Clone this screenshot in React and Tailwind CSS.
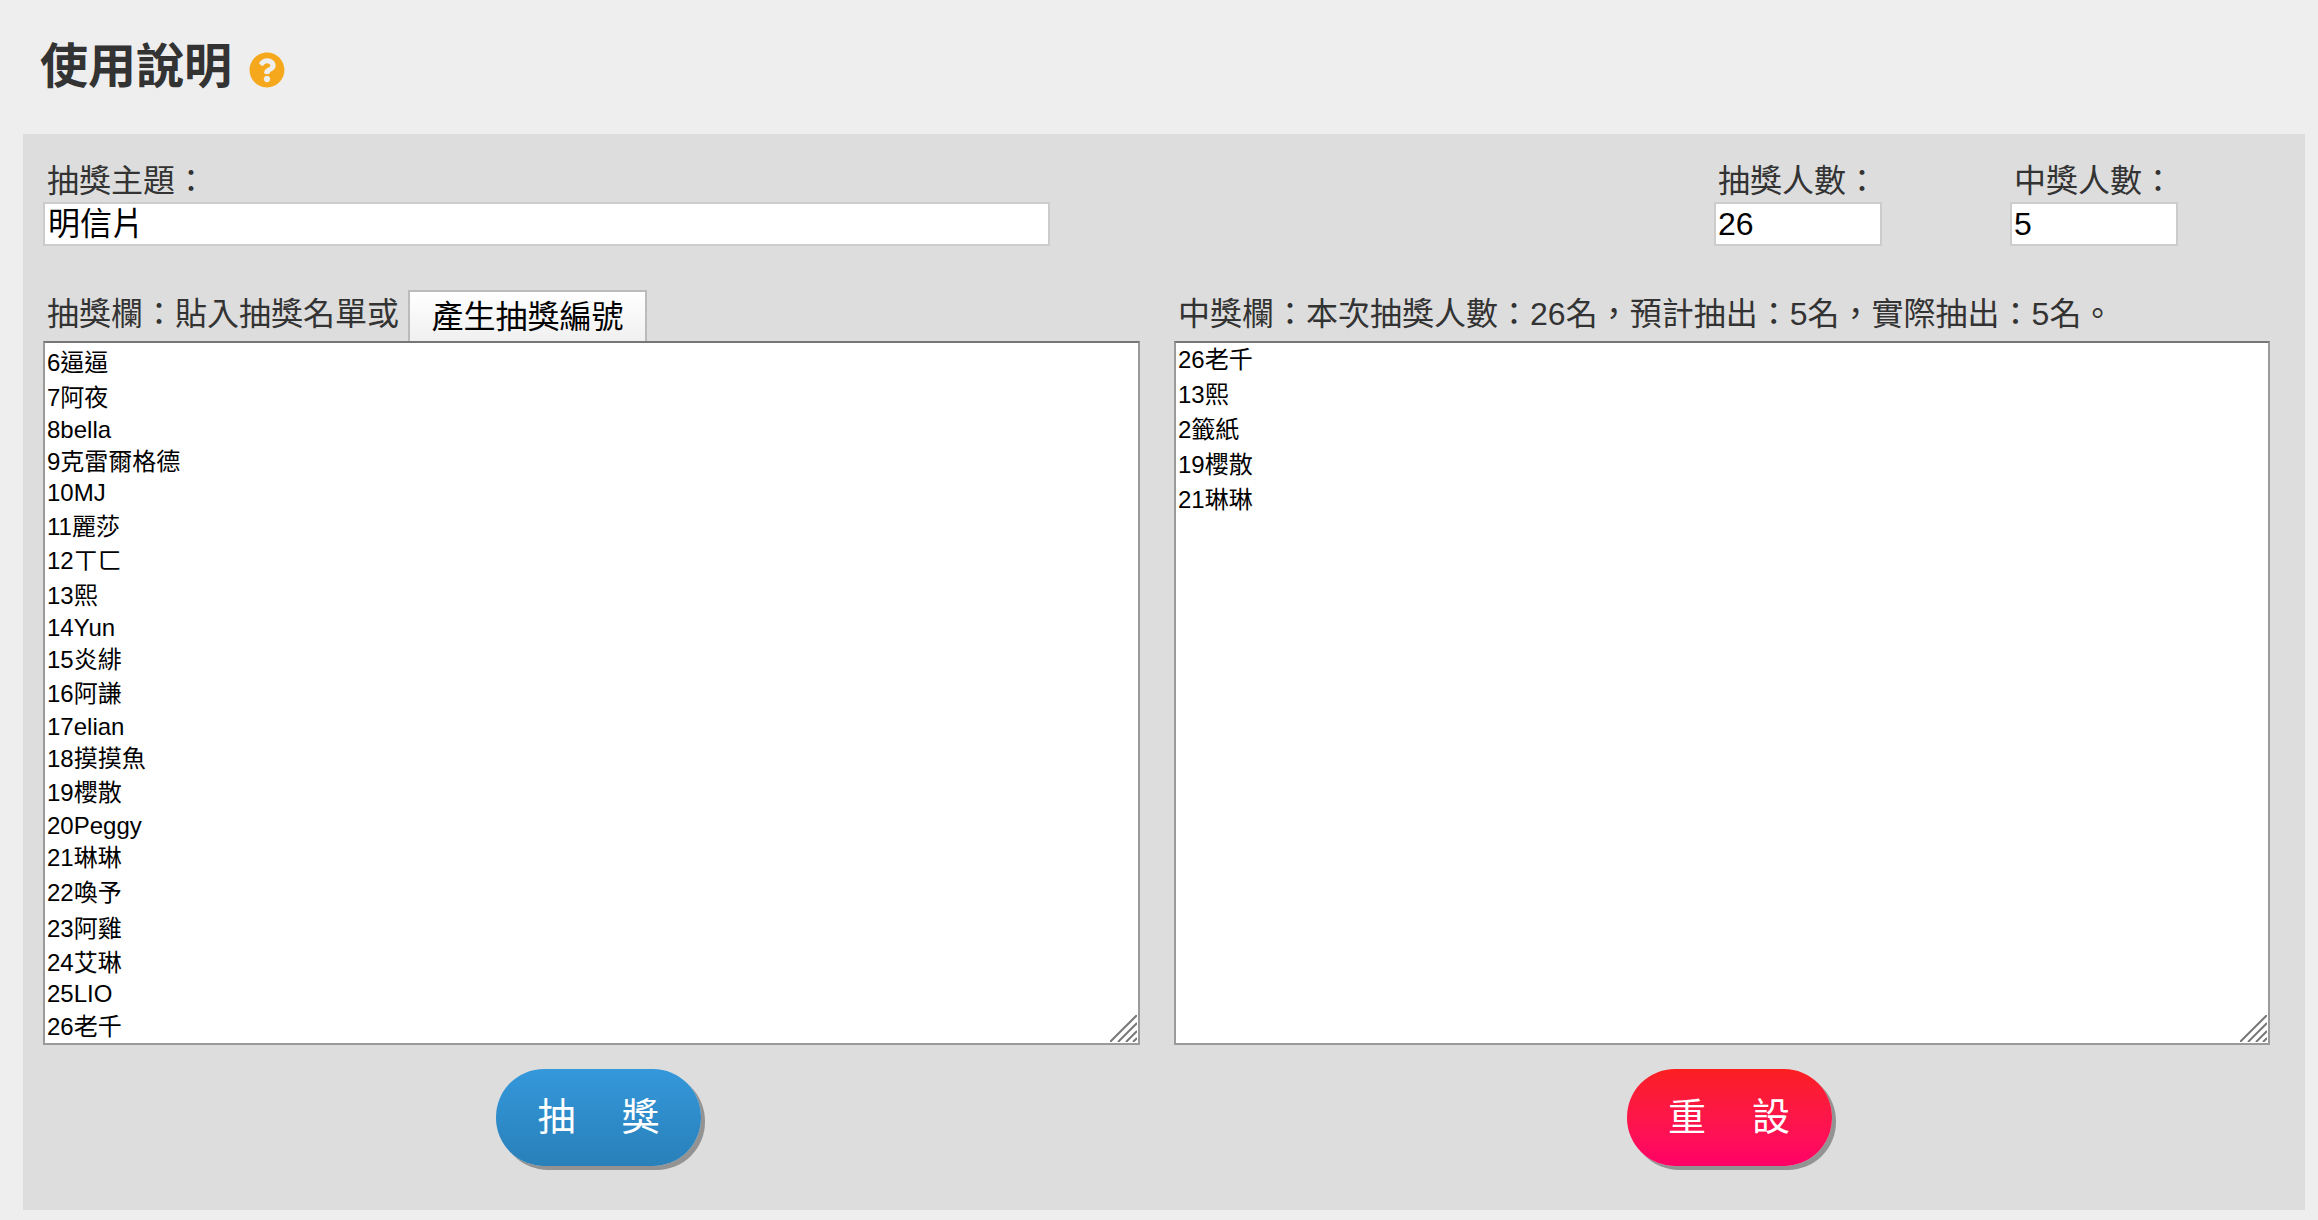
import React from 'react';
import { FaQuestionCircle } from 'react-icons/fa';

// row heights vary a bit in the original because of font fallback
const entries = [
  ['6逼逼', 'h-[35px]'],
  ['7阿夜', 'h-[32px]'],
  ['8bella', 'h-[32px]'],
  ['9克雷爾格德', 'h-[31px]'],
  ['10MJ', 'h-[34px]'],
  ['11麗莎', 'h-[34px]'],
  ['12ㄒㄈ', 'h-[35px]'],
  ['13熙', 'h-[32px]'],
  ['14Yun', 'h-[32px]'],
  ['15炎緋', 'h-[34px]'],
  ['16阿謙', 'h-[33px]'],
  ['17elian', 'h-[32px]'],
  ['18摸摸魚', 'h-[34px]'],
  ['19櫻散', 'h-[33px]'],
  ['20Peggy', 'h-[32px]'],
  ['21琳琳', 'h-[35px]'],
  ['22喚予', 'h-[36px]'],
  ['23阿雞', 'h-[34px]'],
  ['24艾琳', 'h-[31px]'],
  ['25LIO', 'h-[33px]'],
  ['26老千', 'h-[32px]'],
];

const winners = ['26老千', '13熙', '2籤紙', '19櫻散', '21琳琳'];

// full-width punctuation
const COLON = '\uFF1A';
const COMMA = '\uFF0C';

// textarea corner grip
const Grip = () => (
  <svg className="absolute bottom-[1px] right-[1px]" width="27" height="27" viewBox="0 0 27 27" fill="none" stroke="#777777" strokeWidth="2">
    <path d="M0 27 27 0" />
    <path d="M8 27 27 8" />
    <path d="M16 27 27 16" />
    <path d="M23 27 27 23" />
  </svg>
);

const App = () => {
  return (
    <div className="h-screen overflow-hidden bg-[#eeeeee] font-['Liberation_Sans','Noto_Sans_CJK_TC',sans-serif] text-[#333333]">
      {/* Title */}
      <div className="flex h-[134px] items-center pb-[1px] pl-[40px]">
        <h1 className="text-[48px] font-bold leading-none">使用說明</h1>
        <FaQuestionCircle className="ml-[17px] mt-[6px] h-[36px] w-[36px] text-[#f5a81c]" />
      </div>

      {/* Panel */}
      <div className="ml-[23px] mr-[13px] h-[1076px] bg-[#dddddd] pl-[20px] pr-[22px] pt-[27px]">
        {/* Top fields */}
        <div className="flex">
          <div className="w-[1007px]">
            <label className="block h-[41px] pl-[4px] text-[32px] leading-[40px]">抽獎主題{COLON}</label>
            <div className="flex h-[44px] items-center border-2 border-[#cccccc] bg-white pl-[3px] text-[32px] text-black">明信片</div>
          </div>
          <div className="ml-[664px] w-[168px]">
            <label className="block h-[41px] pl-[4px] text-[32px] leading-[40px]">抽獎人數{COLON}</label>
            <div className="flex h-[44px] items-center border-2 border-[#cccccc] bg-white pl-[2px] text-[32px] text-black">26</div>
          </div>
          <div className="ml-[128px] w-[168px]">
            <label className="block h-[41px] pl-[4px] text-[32px] leading-[40px]">中獎人數{COLON}</label>
            <div className="flex h-[44px] items-center border-2 border-[#cccccc] bg-white pl-[2px] text-[32px] text-black">5</div>
          </div>
        </div>

        {/* Lists */}
        <div className="mt-[44px] grid grid-cols-[1097px_1096px] gap-x-[34px]">
          <div>
            <div className="flex h-[51px] items-end pl-[4px]">
              <span className="mb-[7px] text-[32px] leading-[40px]">抽獎欄{COLON}貼入抽獎名單或</span>
              <button className="ml-[9px] h-[51px] w-[239px] border-2 border-b-0 border-[#bbbbbb] bg-gradient-to-b from-white to-[#f0f0f0] text-[32px] text-black">
                產生抽獎編號
              </button>
            </div>
            <div className="relative h-[704px] overflow-hidden border-2 border-[#9a9a9a] border-t-[#767676] bg-white pl-[2px] pt-[4px] text-[24px] text-black">
              {entries.map(([name, height]) => (
                <div key={name} className={`${height} leading-[32px]`}>{name}</div>
              ))}
              <Grip />
            </div>
          </div>
          <div>
            <div className="flex h-[51px] items-end pl-[4px]">
              <span className="mb-[7px] text-[32px] leading-[40px]">
                中獎欄{COLON}本次抽獎人數{COLON}26名{COMMA}預計抽出{COLON}5名{COMMA}實際抽出{COLON}5名。
              </span>
            </div>
            <div className="relative h-[704px] overflow-hidden border-2 border-[#9a9a9a] border-t-[#767676] bg-white pl-[2px] pt-[1px] text-[24px] text-black">
              {winners.map((name) => (
                <div key={name} className="h-[35px] leading-[32px]">{name}</div>
              ))}
              <Grip />
            </div>
          </div>
        </div>

        {/* Actions */}
        <div className="mt-[24px] grid grid-cols-[1097px_1096px] gap-x-[34px]">
          <div className="flex justify-center pl-[14px]">
            <button className="h-[97px] w-[205px] rounded-[48px] bg-gradient-to-b from-[#3498db] to-[#2980b9] pl-[4px] text-[38px] tracking-[4px] text-white shadow-[4px_4px_0_0_#939393]">
              抽{'\u3000'}獎
            </button>
          </div>
          <div className="flex justify-center pl-[14px]">
            <button className="h-[97px] w-[205px] rounded-[48px] bg-gradient-to-b from-[#fb1f1f] to-[#ff0066] pl-[4px] text-[38px] tracking-[4px] text-white shadow-[4px_4px_0_0_#939393]">
              重{'\u3000'}設
            </button>
          </div>
        </div>
      </div>
    </div>
  );
};

export default App;
